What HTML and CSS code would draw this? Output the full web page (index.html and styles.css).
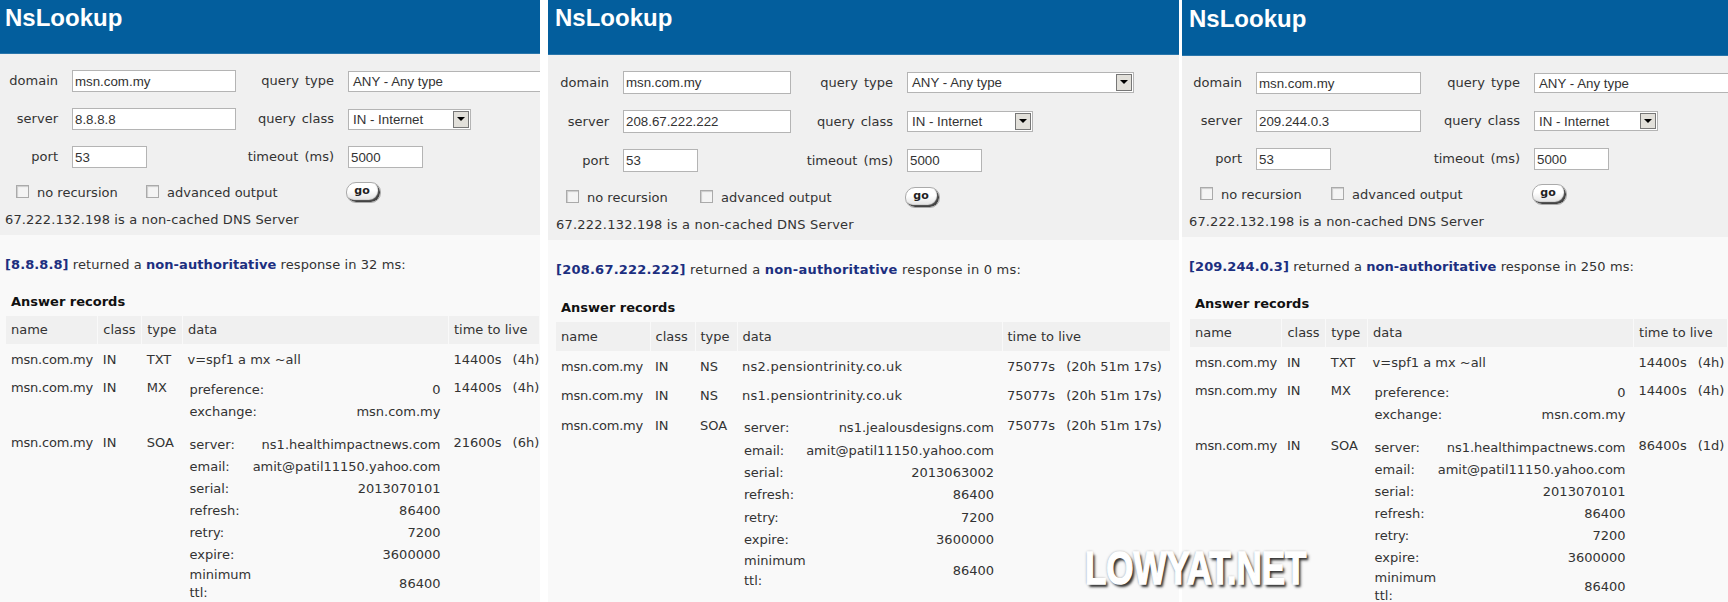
FILE: index.html
```html
<!DOCTYPE HTML>
<html>
<head>
	<title>NsLookup</title>
	<link rel="stylesheet" href="styles.css">
</head>
<body>

<div class="page">

	<!-- google -->
	<div class="panel one">
		<div class="head"><h1>NsLookup</h1></div>
		<div class="lookup">
			<div class="fields">
				<label>domain</label><input class="text wide" type="text" value="msn.com.my">
				<label>query type</label><div class="select big"><span>ANY - Any type</span><b class="arrow"></b></div>
				<label>server</label><input class="text wide" type="text" value="8.8.8.8">
				<label>query class</label><div class="select small"><span>IN - Internet</span><b class="arrow"></b></div>
				<label>port</label><input class="text short" type="text" value="53">
				<label>timeout (ms)</label><input class="text short" type="text" value="5000">
			</div>
			<div class="checks">
				<div class="check first"><input type="checkbox">no recursion</div>
				<div class="check second"><input type="checkbox">advanced output</div>
				<button class="go">go</button>
			</div>
			<p class="status">67.222.132.198 is a non-cached DNS Server</p>
		</div>
		<div class="results">
			<p class="returned"><b>[8.8.8.8]</b> returned a <b>non-authoritative</b> response in 32 ms:</p>
			<h2>Answer records</h2>
			<table class="records">
				<colgroup><col class="c-name"><col class="c-class"><col class="c-type"><col class="c-data"><col class="c-ttl"></colgroup>
				<tr><th>name</th><th>class</th><th>type</th><th>data</th><th>time to live</th></tr>
				<tr><td>msn.com.my</td><td>IN</td><td>TXT</td><td>v=spf1 a mx ~all</td><td>14400s<span class="human">(4h)</span></td></tr>
				<tr><td>msn.com.my</td><td>IN</td><td>MX</td><td class="nested">
					<table class="inner">
						<tr><td>preference:</td><td>0</td></tr>
						<tr><td>exchange:</td><td>msn.com.my</td></tr>
					</table>
				</td><td>14400s<span class="human">(4h)</span></td></tr>
				<tr><td>msn.com.my</td><td>IN</td><td>SOA</td><td class="nested">
					<table class="inner">
						<tr><td>server:</td><td>ns1.healthimpactnews.com</td></tr>
						<tr><td>email:</td><td>amit@patil11150.yahoo.com</td></tr>
						<tr><td>serial:</td><td>2013070101</td></tr>
						<tr><td>refresh:</td><td>86400</td></tr>
						<tr><td>retry:</td><td>7200</td></tr>
						<tr><td>expire:</td><td>3600000</td></tr>
						<tr><td>minimum<br>ttl:</td><td>86400</td></tr>
					</table>
				</td><td>21600s<span class="human">(6h)</span></td></tr>
			</table>
		</div>
	</div>

	<!-- opendns -->
	<div class="panel two">
		<div class="head"><h1>NsLookup</h1></div>
		<div class="lookup">
			<div class="fields">
				<label>domain</label><input class="text wide" type="text" value="msn.com.my">
				<label>query type</label><div class="select big"><span>ANY - Any type</span><b class="arrow"></b></div>
				<label>server</label><input class="text wide" type="text" value="208.67.222.222">
				<label>query class</label><div class="select small"><span>IN - Internet</span><b class="arrow"></b></div>
				<label>port</label><input class="text short" type="text" value="53">
				<label>timeout (ms)</label><input class="text short" type="text" value="5000">
			</div>
			<div class="checks">
				<div class="check first"><input type="checkbox">no recursion</div>
				<div class="check second"><input type="checkbox">advanced output</div>
				<button class="go">go</button>
			</div>
			<p class="status">67.222.132.198 is a non-cached DNS Server</p>
		</div>
		<div class="results">
			<p class="returned"><b>[208.67.222.222]</b> returned a <b>non-authoritative</b> response in 0 ms:</p>
			<h2>Answer records</h2>
			<table class="records">
				<colgroup><col class="c-name"><col class="c-class"><col class="c-type"><col class="c-data"><col class="c-ttl"></colgroup>
				<tr><th>name</th><th>class</th><th>type</th><th>data</th><th>time to live</th></tr>
				<tr><td>msn.com.my</td><td>IN</td><td>NS</td><td>ns2.pensiontrinity.co.uk</td><td>75077s<span class="human">(20h 51m 17s)</span></td></tr>
				<tr><td>msn.com.my</td><td>IN</td><td>NS</td><td>ns1.pensiontrinity.co.uk</td><td>75077s<span class="human">(20h 51m 17s)</span></td></tr>
				<tr><td>msn.com.my</td><td>IN</td><td>SOA</td><td class="nested">
					<table class="inner">
						<tr><td>server:</td><td>ns1.jealousdesigns.com</td></tr>
						<tr><td>email:</td><td>amit@patil11150.yahoo.com</td></tr>
						<tr><td>serial:</td><td>2013063002</td></tr>
						<tr><td>refresh:</td><td>86400</td></tr>
						<tr><td>retry:</td><td>7200</td></tr>
						<tr><td>expire:</td><td>3600000</td></tr>
						<tr><td>minimum<br>ttl:</td><td>86400</td></tr>
					</table>
				</td><td>75077s<span class="human">(20h 51m 17s)</span></td></tr>
			</table>
		</div>
	</div>

	<!-- level3 -->
	<div class="panel three">
		<div class="head"><h1>NsLookup</h1></div>
		<div class="lookup">
			<div class="fields">
				<label>domain</label><input class="text wide" type="text" value="msn.com.my">
				<label>query type</label><div class="select big"><span>ANY - Any type</span><b class="arrow"></b></div>
				<label>server</label><input class="text wide" type="text" value="209.244.0.3">
				<label>query class</label><div class="select small"><span>IN - Internet</span><b class="arrow"></b></div>
				<label>port</label><input class="text short" type="text" value="53">
				<label>timeout (ms)</label><input class="text short" type="text" value="5000">
			</div>
			<div class="checks">
				<div class="check first"><input type="checkbox">no recursion</div>
				<div class="check second"><input type="checkbox">advanced output</div>
				<button class="go">go</button>
			</div>
			<p class="status">67.222.132.198 is a non-cached DNS Server</p>
		</div>
		<div class="results">
			<p class="returned"><b>[209.244.0.3]</b> returned a <b>non-authoritative</b> response in 250 ms:</p>
			<h2>Answer records</h2>
			<table class="records">
				<colgroup><col class="c-name"><col class="c-class"><col class="c-type"><col class="c-data"><col class="c-ttl"></colgroup>
				<tr><th>name</th><th>class</th><th>type</th><th>data</th><th>time to live</th></tr>
				<tr><td>msn.com.my</td><td>IN</td><td>TXT</td><td>v=spf1 a mx ~all</td><td>14400s<span class="human">(4h)</span></td></tr>
				<tr><td>msn.com.my</td><td>IN</td><td>MX</td><td class="nested">
					<table class="inner">
						<tr><td>preference:</td><td>0</td></tr>
						<tr><td>exchange:</td><td>msn.com.my</td></tr>
					</table>
				</td><td>14400s<span class="human">(4h)</span></td></tr>
				<tr><td>msn.com.my</td><td>IN</td><td>SOA</td><td class="nested">
					<table class="inner">
						<tr><td>server:</td><td>ns1.healthimpactnews.com</td></tr>
						<tr><td>email:</td><td>amit@patil11150.yahoo.com</td></tr>
						<tr><td>serial:</td><td>2013070101</td></tr>
						<tr><td>refresh:</td><td>86400</td></tr>
						<tr><td>retry:</td><td>7200</td></tr>
						<tr><td>expire:</td><td>3600000</td></tr>
						<tr><td>minimum<br>ttl:</td><td>86400</td></tr>
					</table>
				</td><td>86400s<span class="human">(1d)</span></td></tr>
			</table>
		</div>
	</div>

	<div class="watermark">LOWYAT.NET</div>
</div>

</body>
</html>
```

FILE: styles.css
```css
html, body {
	margin: 0;
	background: #fff;
}

.page {
	position: relative;
	display: flex;
	width: 1728px;
	height: 602px;
	overflow: hidden;
}

/* each screenshot was scaled a little differently, so the sizes are set per panel */
.panel {
	flex: none;
	height: 602px;
	overflow: hidden;
	background: #f9f9f9;
	color: #333;
	font-family: "DejaVu Sans", Verdana, sans-serif;
	font-size: 13px;
	line-height: 16px;
}
.one {
	width: 540px;
	margin-right: 8px;
	--c1: 72px; --c2: 164px; --c3: 112px;
	--head: 54px; --form: 181px; --field: 22px; --sel: 21px;
	--title-left: 5px; --title-top: 4px;
	--check-top: 15px; --check-left: 16px; --check-1: 130px; --check-2: 200px;
	--pad: 5px; --top: 22px; --status-ls: .12px; --returned-ls: .08px;
	--w1: 92px; --w2: 44px; --w3: 41px; --w4: 266px; --w5: 91px;
	--sel-w: 227px; --sel-small: 123px;
	--gap-h: 21px; --gap-t: 6px; --tbl-left: 6px; --h2-left: 11px;
	--head-row: 28px; --row: 29px; --in-row: 22px; --in-line: 18px; --data-ls: 0;
}
.two {
	width: 631px;
	margin-right: 3px;
	--c1: 75px; --c2: 168px; --c3: 116px;
	--head: 55px; --form: 185px; --field: 23px; --sel: 21px;
	--title-left: 7px; --title-top: 4px;
	--check-top: 16px; --check-left: 18px; --check-1: 134px; --check-2: 205px;
	--pad: 8px; --top: 22px; --status-ls: .22px; --returned-ls: .22px;
	--w1: 94px; --w2: 45px; --w3: 42px; --w4: 265px; --w5: 168px;
	--sel-w: 227px; --sel-small: 126px;
	--gap-h: 22px; --gap-t: 6px; --tbl-left: 8px; --h2-left: 13px;
	--head-row: 29px; --row: 30px; --in-row: 22.4px; --in-line: 20px; --data-ls: .25px;
}
.three {
	width: 546px;
	--c1: 74px; --c2: 165px; --c3: 113px;
	--head: 56px; --form: 181px; --field: 22px; --sel: 20px;
	--title-left: 7px; --title-top: 5px;
	--check-top: 15px; --check-left: 18px; --check-1: 131px; --check-2: 201px;
	--pad: 7px; --top: 22px; --status-ls: .15px; --returned-ls: .07px;
	--w1: 92px; --w2: 44px; --w3: 42px; --w4: 266px; --w5: 94px;
	--sel-w: 227px; --sel-small: 124px;
	--gap-h: 21px; --gap-t: 7px; --tbl-left: 8px; --h2-left: 13px;
	--head-row: 28px; --row: 29px; --in-row: 22px; --in-line: 18px; --data-ls: 0;
}

.head {
	height: var(--head);
	box-sizing: border-box;
	padding: var(--title-top) 0 0 var(--title-left);
	background: #035e9d;
	border-bottom: 1px solid #2a76ab;
}
.head h1 {
	margin: 0;
	color: #fff;
	font: bold 24px/28px "Liberation Sans", Arial, sans-serif;
}

.lookup {
	height: var(--form);
	box-sizing: border-box;
	padding-top: 16px;
	background: #f0f0f0;
}

.fields {
	display: grid;
	grid-template-columns: var(--c1) var(--c2) var(--c3) 1fr;
	grid-auto-rows: var(--field);
	row-gap: 16px;
	align-items: center;
}
.fields label {
	padding-right: 14px;
	text-align: right;
	word-spacing: 2px;
}

.text {
	box-sizing: border-box;
	height: var(--field);
	padding: 0 1px 0 2px;
	background: #fff;
	border: 1px solid #b4b4b4;
	color: #333;
	font: 13.3px "Liberation Sans", Arial, sans-serif;
}
.wide { width: var(--c2); }
.short { width: 75px; }

.select {
	display: flex;
	align-items: center;
	justify-content: space-between;
	box-sizing: border-box;
	height: var(--sel);
	padding: 0 1px 0 4px;
	background: #fff;
	border: 1px solid #b4b4b4;
	color: #333;
	font: 13.3px "Liberation Sans", Arial, sans-serif;
}
.select.big { width: var(--sel-w); }
.select.small { width: var(--sel-small); }
.arrow {
	position: relative;
	flex: none;
	box-sizing: border-box;
	width: 16px;
	height: calc(var(--sel) - 4px);
	background: #e2e0da;
	border: 1px solid #777;
}
.arrow::after {
	content: "";
	position: absolute;
	left: 3px;
	top: 5px;
	border: 4px solid transparent;
	border-top-color: #000;
	border-bottom: 0;
}

.checks {
	display: flex;
	align-items: center;
	height: 20px;
	margin-top: var(--check-top);
	padding-left: var(--check-left);
}
.check {
	display: flex;
	align-items: center;
	flex: none;
}
.check input {
	appearance: none;
	width: 13px;
	height: 13px;
	margin: -3px 8px 0 0;
	background: #f4f4f4;
	border: 1px solid #aaa;
	box-shadow: inset 1px 1px 1px #ccc;
}
.first { width: var(--check-1); }
.second { width: var(--check-2); }

.go {
	width: 35px;
	height: 21px;
	margin-top: -2px;
	padding: 0 3px 3px 0;
	background: linear-gradient(#fff 40%, #ddd);
	border: 1px solid #aaa;
	border-radius: 10px;
	box-shadow: inset -2px -2px 1px #444;
	color: #222;
	font: bold 11px "DejaVu Sans", sans-serif;
}

.status {
	margin: 9px 0 0;
	padding-left: var(--pad);
	letter-spacing: var(--status-ls);
}

.results {
	padding-top: var(--top);
}
.returned {
	margin: 0;
	padding-left: var(--pad);
	letter-spacing: var(--returned-ls);
}
.returned b {
	color: #1c2f80;
}
h2 {
	margin: var(--gap-h) 0 var(--gap-t);
	padding-left: var(--h2-left);
	color: #111;
	font-size: 13px;
	line-height: 16px;
}

.records {
	margin-left: var(--tbl-left);
	border-collapse: collapse;
	table-layout: fixed;
}
.c-name { width: var(--w1); }
.c-class { width: var(--w2); }
.c-type { width: var(--w3); }
.c-data { width: var(--w4); }
.c-ttl { width: var(--w5); }

.records th {
	height: var(--head-row);
	padding: 0 0 0 5px;
	background: #f0f0f0;
	border-right: 1px solid #f9f9f9;
	font-weight: normal;
	text-align: left;
	white-space: nowrap;
}
.records > tbody > tr > td {
	height: var(--row);
	box-sizing: border-box;
	padding: 7px 0 0 5px;
	vertical-align: top;
	white-space: nowrap;
}
.records > tbody > tr:nth-child(2) > td {
	padding-top: 8px;
}
.records > tbody > tr > td:first-child {
	letter-spacing: -.2px;
}
.records > tbody > tr > td:nth-child(4) {
	letter-spacing: var(--data-ls);
}
.records > tbody > tr > td.nested {
	padding: 6px 8px 5px 7px;
}
.human {
	margin-left: 11px;
}

.inner {
	width: 100%;
	border-collapse: collapse;
}
.inner td {
	height: var(--in-row);
	padding: 0;
	letter-spacing: 0;
	line-height: var(--in-line);
	white-space: nowrap;
}
.inner td + td {
	text-align: right;
}

.watermark {
	position: absolute;
	left: 1085px;
	top: 542px;
	color: #fff;
	font: bold 46px/52px "Liberation Sans", Arial, sans-serif;
	-webkit-text-stroke: 1.5px #fff;
	text-shadow: 3px 3px 3px #333, 0 0 3px #666;
	transform: scaleX(0.76);
	transform-origin: left center;
	white-space: nowrap;
}
```
